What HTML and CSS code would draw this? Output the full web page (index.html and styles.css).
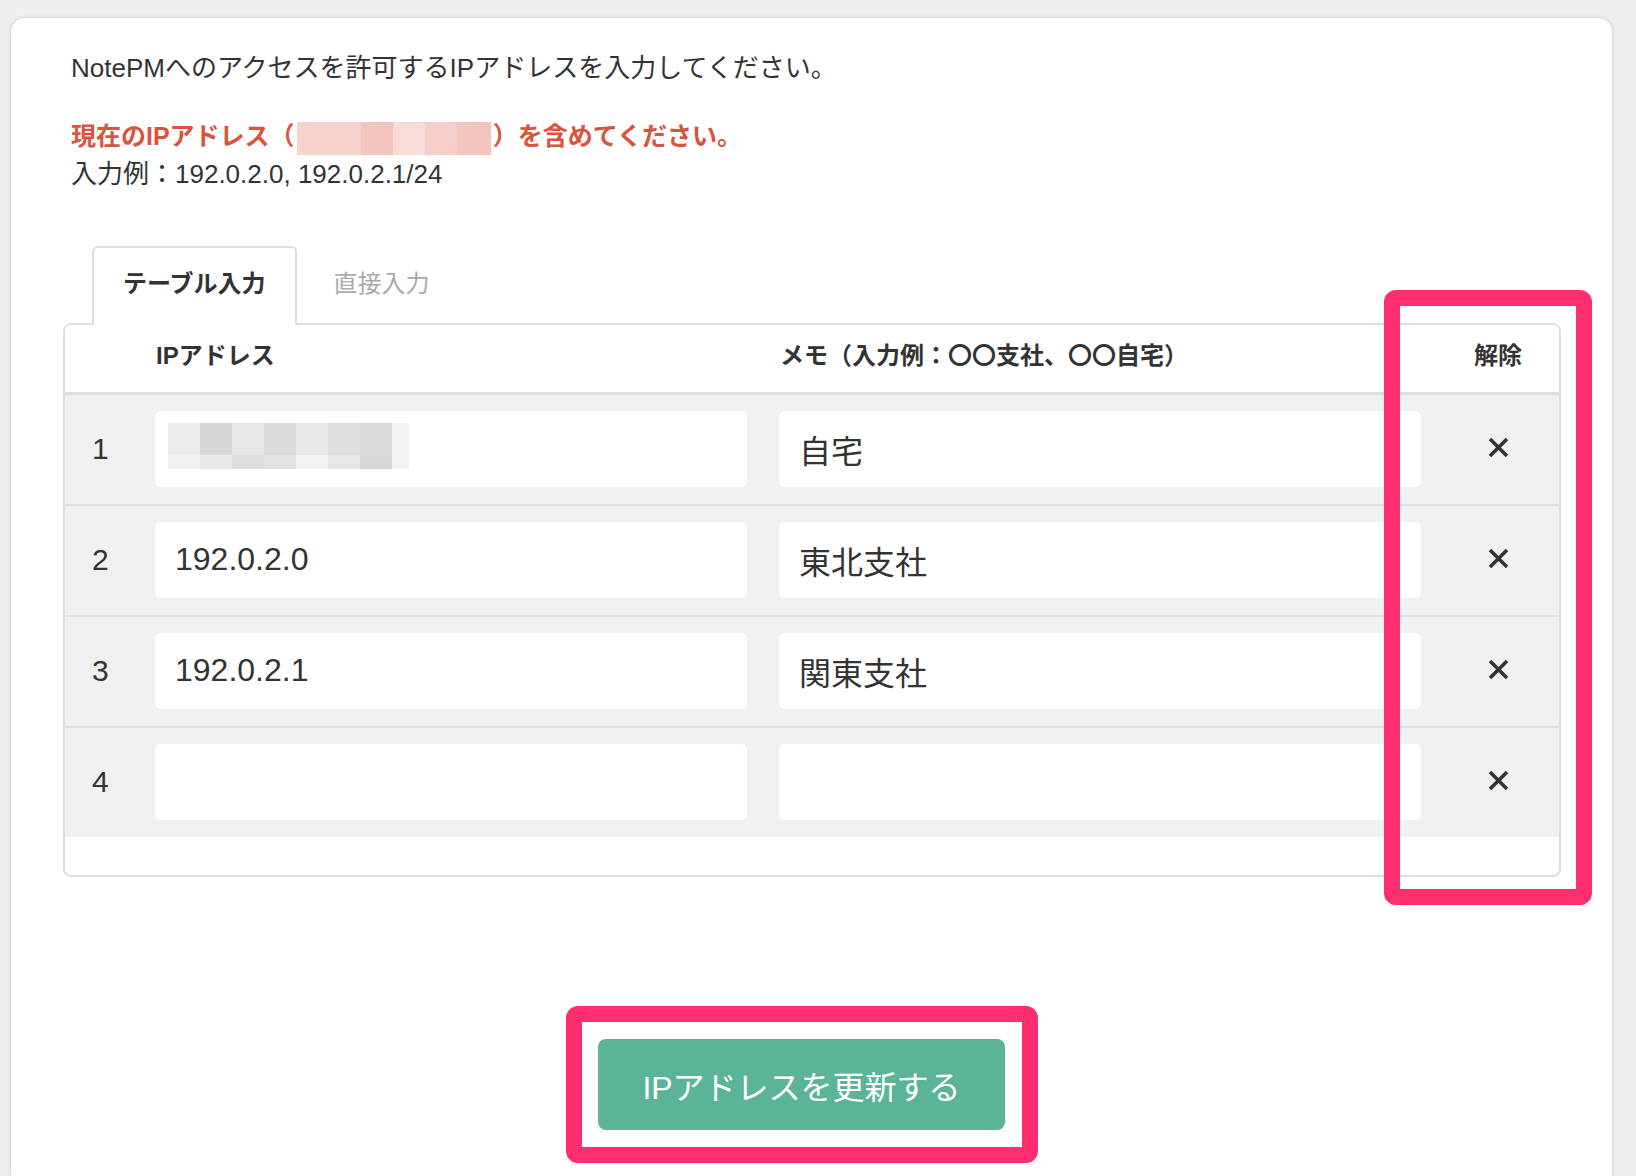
FILE: index.html
```html
<!DOCTYPE html>
<html lang="ja">
<head>
    <meta charset="UTF-8">
    <meta name="viewport" content="width=device-width, initial-scale=1.0">
    <title>IPアドレス制限 - NotePM</title>
    <link rel="stylesheet" href="styles.css">
</head>
<body>
    <div class="card">
        <p class="lead">NotePMへのアクセスを許可するIPアドレスを入力してください。</p>
        <p class="notice">現在のIPアドレス（<span class="mosaic mosaic-red"><i></i><i></i><i></i><i></i><i></i><i></i></span>）を含めてください。</p>
        <p class="example">入力例：192.0.2.0, 192.0.2.1/24</p>

        <div class="tabs">
            <div class="tab active">テーブル入力</div>
            <div class="tab">直接入力</div>
        </div>

        <div class="panel">
            <div class="row head">
                <div class="num"></div>
                <div class="col-ip">IPアドレス</div>
                <div class="col-memo">メモ（入力例：〇〇支社、〇〇自宅）</div>
                <div class="col-del">解除</div>
            </div>

            <div class="row">
                <div class="num">1</div>
                <div class="col-ip field">
                    <input type="text" value="">
                    <span class="mosaic mosaic-gray">
                        <i></i><i></i><i></i><i></i><i></i><i></i><i></i><i></i>
                        <i></i><i></i><i></i><i></i><i></i><i></i><i></i><i></i>
                    </span>
                </div>
                <div class="col-memo field"><input type="text" value="自宅"></div>
                <div class="col-del"><button class="del" type="button"><svg width="23" height="23" viewBox="0 0 23 23"><path d="M3 3 L20 20 M20 3 L3 20" stroke="#333" stroke-width="3.6" fill="none"/></svg></button></div>
            </div>

            <div class="row">
                <div class="num">2</div>
                <div class="col-ip field"><input type="text" value="192.0.2.0"></div>
                <div class="col-memo field"><input type="text" value="東北支社"></div>
                <div class="col-del"><button class="del" type="button"><svg width="23" height="23" viewBox="0 0 23 23"><path d="M3 3 L20 20 M20 3 L3 20" stroke="#333" stroke-width="3.6" fill="none"/></svg></button></div>
            </div>

            <div class="row">
                <div class="num">3</div>
                <div class="col-ip field"><input type="text" value="192.0.2.1"></div>
                <div class="col-memo field"><input type="text" value="関東支社"></div>
                <div class="col-del"><button class="del" type="button"><svg width="23" height="23" viewBox="0 0 23 23"><path d="M3 3 L20 20 M20 3 L3 20" stroke="#333" stroke-width="3.6" fill="none"/></svg></button></div>
            </div>

            <div class="row">
                <div class="num">4</div>
                <div class="col-ip field"><input type="text" value=""></div>
                <div class="col-memo field"><input type="text" value=""></div>
                <div class="col-del"><button class="del" type="button"><svg width="23" height="23" viewBox="0 0 23 23"><path d="M3 3 L20 20 M20 3 L3 20" stroke="#333" stroke-width="3.6" fill="none"/></svg></button></div>
            </div>
        </div>

        <div class="actions">
            <button class="submit" type="button">IPアドレスを更新する</button>
        </div>

        <!-- 注釈の枠 -->
        <div class="mark mark-del"></div>
        <div class="mark mark-submit"></div>
    </div>
</body>
</html>
```

FILE: styles.css
```css
/* 全体 */
html, body {
    height: 100%;
    overflow: hidden;
}

body {
    margin: 0;
    padding: 18px 24px 0 11px;
    box-sizing: border-box;
    background: #efefef;
    font-family: "Liberation Sans", "Noto Sans CJK JP", sans-serif;
    color: #333333;
}

.card {
    position: relative;
    box-sizing: border-box;
    height: 100%;
    background: #ffffff;
    border-radius: 14px 14px 0 0;
    box-shadow: 0 0 4px rgba(0, 0, 0, 0.18);
    padding: 31px 51px 0 52px;
}

/* 説明文 */
.lead,
.notice,
.example {
    margin: 0 0 0 8px;
    font-size: 26px;
    line-height: 38px;
}

.lead {
    margin-bottom: 30px;
}

.notice {
    font-size: 25px;
    color: #d9543c;
    font-weight: bold;
}

.example {
    margin-bottom: 53px;
}

/* モザイク */
.mosaic {
    display: inline-flex;
    flex-wrap: wrap;
}

.mosaic i {
    display: block;
}

.mosaic-red {
    width: 194px;
    height: 33px;
    margin: 0 2px;
    vertical-align: middle;
}

.mosaic-red i {
    width: 32px;
    height: 33px;
    background: #f7d3ce;
}

.mosaic-red i:nth-child(3) { background: #f4c5bf; }
.mosaic-red i:nth-child(4) { background: #f9dcd8; }
.mosaic-red i:nth-child(5) { background: #f6cec9; }
.mosaic-red i:nth-child(6) { background: #f4c4bf; width: 34px; }

.mosaic-gray {
    position: absolute;
    left: 13px;
    top: 12px;
    width: 241px;
}

.mosaic-gray i {
    width: 32px;
    height: 32px;
    background: #ebebeb;
}

.mosaic-gray i:nth-child(n+9) { height: 14px; }
.mosaic-gray i:nth-child(8),
.mosaic-gray i:nth-child(16) { width: 17px; background: #f3f3f3; }
.mosaic-gray i:nth-child(2) { background: #d6d6d6; }
.mosaic-gray i:nth-child(3) { background: #e6e6e6; }
.mosaic-gray i:nth-child(4) { background: #dadada; }
.mosaic-gray i:nth-child(5) { background: #e8e8e8; }
.mosaic-gray i:nth-child(6) { background: #dfdfdf; }
.mosaic-gray i:nth-child(7) { background: #d9d9d9; }
.mosaic-gray i:nth-child(9) { background: #f0f0f0; }
.mosaic-gray i:nth-child(10) { background: #e8e8e8; }
.mosaic-gray i:nth-child(11) { background: #dedede; }
.mosaic-gray i:nth-child(12) { background: #e1e1e1; }
.mosaic-gray i:nth-child(13) { background: #f2f2f2; }
.mosaic-gray i:nth-child(14) { background: #e6e6e6; }
.mosaic-gray i:nth-child(15) { background: #d8d8d8; }

/* タブ */
.tabs {
    display: flex;
    padding-left: 29px;
}

.tab {
    position: relative;
    z-index: 1;
    margin-right: 6px;
    margin-bottom: -2px;
    padding: 19px 29px 24px;
    border: 2px solid transparent;
    border-bottom: none;
    border-radius: 6px 6px 0 0;
    font-size: 24px;
    line-height: 34px;
    color: #aaaaaa;
}

.tab.active {
    background: #ffffff;
    border-color: #dddddd;
    color: #333333;
    font-weight: bold;
}

/* テーブル */
.panel {
    border: 2px solid #dddddd;
    border-radius: 8px;
    padding-bottom: 38px;
    overflow: hidden;
}

.row {
    display: flex;
    align-items: center;
    background: #f0f0f0;
    padding: 16px 0 17px;
}

.row + .row {
    border-top: 2px solid #dedede;
}

.row.head {
    background: #ffffff;
    padding: 14px 0 19px;
    border-bottom: 3px solid #dddddd;
    font-size: 24px;
    line-height: 34px;
    font-weight: bold;
}

.row.head + .row {
    border-top: none;
}

.num {
    width: 90px;
    box-sizing: border-box;
    padding-left: 27px;
    font-size: 30px;
}

.col-ip {
    width: 592px;
}

.col-memo {
    width: 642px;
    margin-left: 32px;
}

.col-del {
    flex: 1;
    padding-left: 16px;
    text-align: center;
}

.row.head .col-ip,
.row.head .col-memo {
    padding-left: 1px;
    box-sizing: border-box;
}

.field {
    position: relative;
}

.field input {
    display: block;
    width: 100%;
    height: 76px;
    box-sizing: border-box;
    padding: 0 20px 1px;
    border: none;
    border-radius: 6px;
    background: #ffffff;
    font-family: inherit;
    font-size: 32px;
    color: #333333;
    outline: none;
}

.del {
    border: none;
    background: none;
    padding: 0;
    cursor: pointer;
    line-height: 0;
}

/* ボタン */
.actions {
    padding: 162px 21px 0 0;
    text-align: center;
}

.submit {
    width: 407px;
    height: 91px;
    border: none;
    border-radius: 8px;
    background: #5bb498;
    color: #ffffff;
    font-family: inherit;
    font-size: 32px;
    cursor: pointer;
}

/* 注釈 */
.mark {
    position: absolute;
    box-sizing: border-box;
    border: 16px solid #ff2f6e;
    border-radius: 12px;
    pointer-events: none;
}

.mark-del {
    left: 1373px;
    top: 272px;
    width: 208px;
    height: 615px;
}

.mark-submit {
    left: 555px;
    top: 988px;
    width: 472px;
    height: 157px;
}
```
